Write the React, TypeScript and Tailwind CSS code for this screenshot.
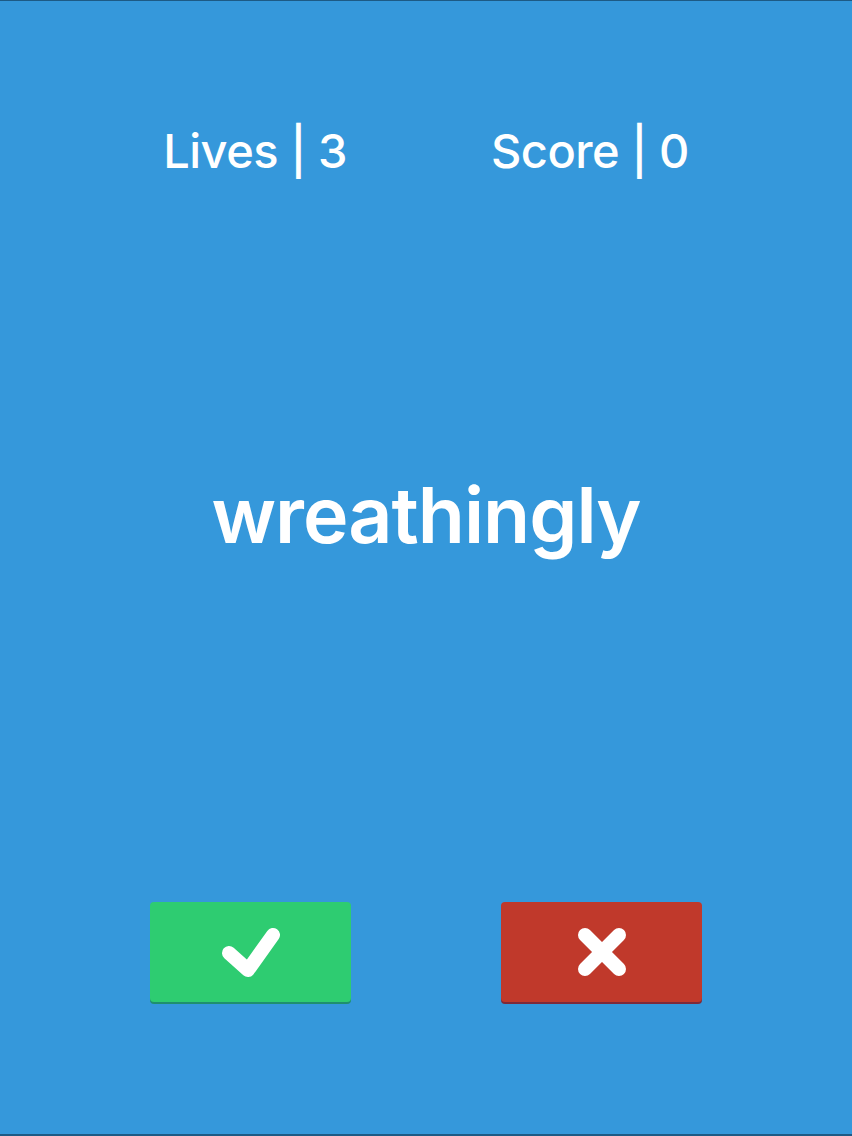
import React from "react";

export default function App() {
  return (
    <div
      className="w-[852px] h-[1136px] bg-[#3598db] flex flex-col items-center border-t border-t-[#1d5a85] border-b-2 border-b-[#1d5a85] text-white"
      style={{ fontFamily: "Inter, 'Noto Sans', sans-serif" }}
    >
      <div className="mt-[120px] flex items-center justify-center gap-[144px] text-[47px] font-medium leading-[60px] tracking-[-0.5px]">
        <span>Lives | 3</span>
        <span>Score | 0</span>
      </div>
      <div className="mt-[284px] text-[77px] font-semibold leading-[100px] tracking-[-1px]">
        wreathingly
      </div>
      <div className="mt-[337px] flex gap-[150px]">
        <button className="w-[201px] h-[100px] rounded-[4px] bg-[#2ecc71] shadow-[0_2px_0_#1f8f6e] flex items-center justify-center">
          <svg width="60" height="52" viewBox="0 0 60 52">
            <polyline
              points="8,27 27,44 52,9"
              fill="none"
              stroke="white"
              strokeWidth="14"
              strokeLinecap="round"
              strokeLinejoin="round"
            />
          </svg>
        </button>
        <button className="w-[201px] h-[100px] rounded-[4px] bg-[#c0392b] shadow-[0_2px_0_#7d2a3a] flex items-center justify-center">
          <svg width="50" height="50" viewBox="0 0 50 50">
            <line x1="8" y1="8" x2="42" y2="42" stroke="white" strokeWidth="14" strokeLinecap="round" />
            <line x1="42" y1="8" x2="8" y2="42" stroke="white" strokeWidth="14" strokeLinecap="round" />
          </svg>
        </button>
      </div>
    </div>
  );
}
